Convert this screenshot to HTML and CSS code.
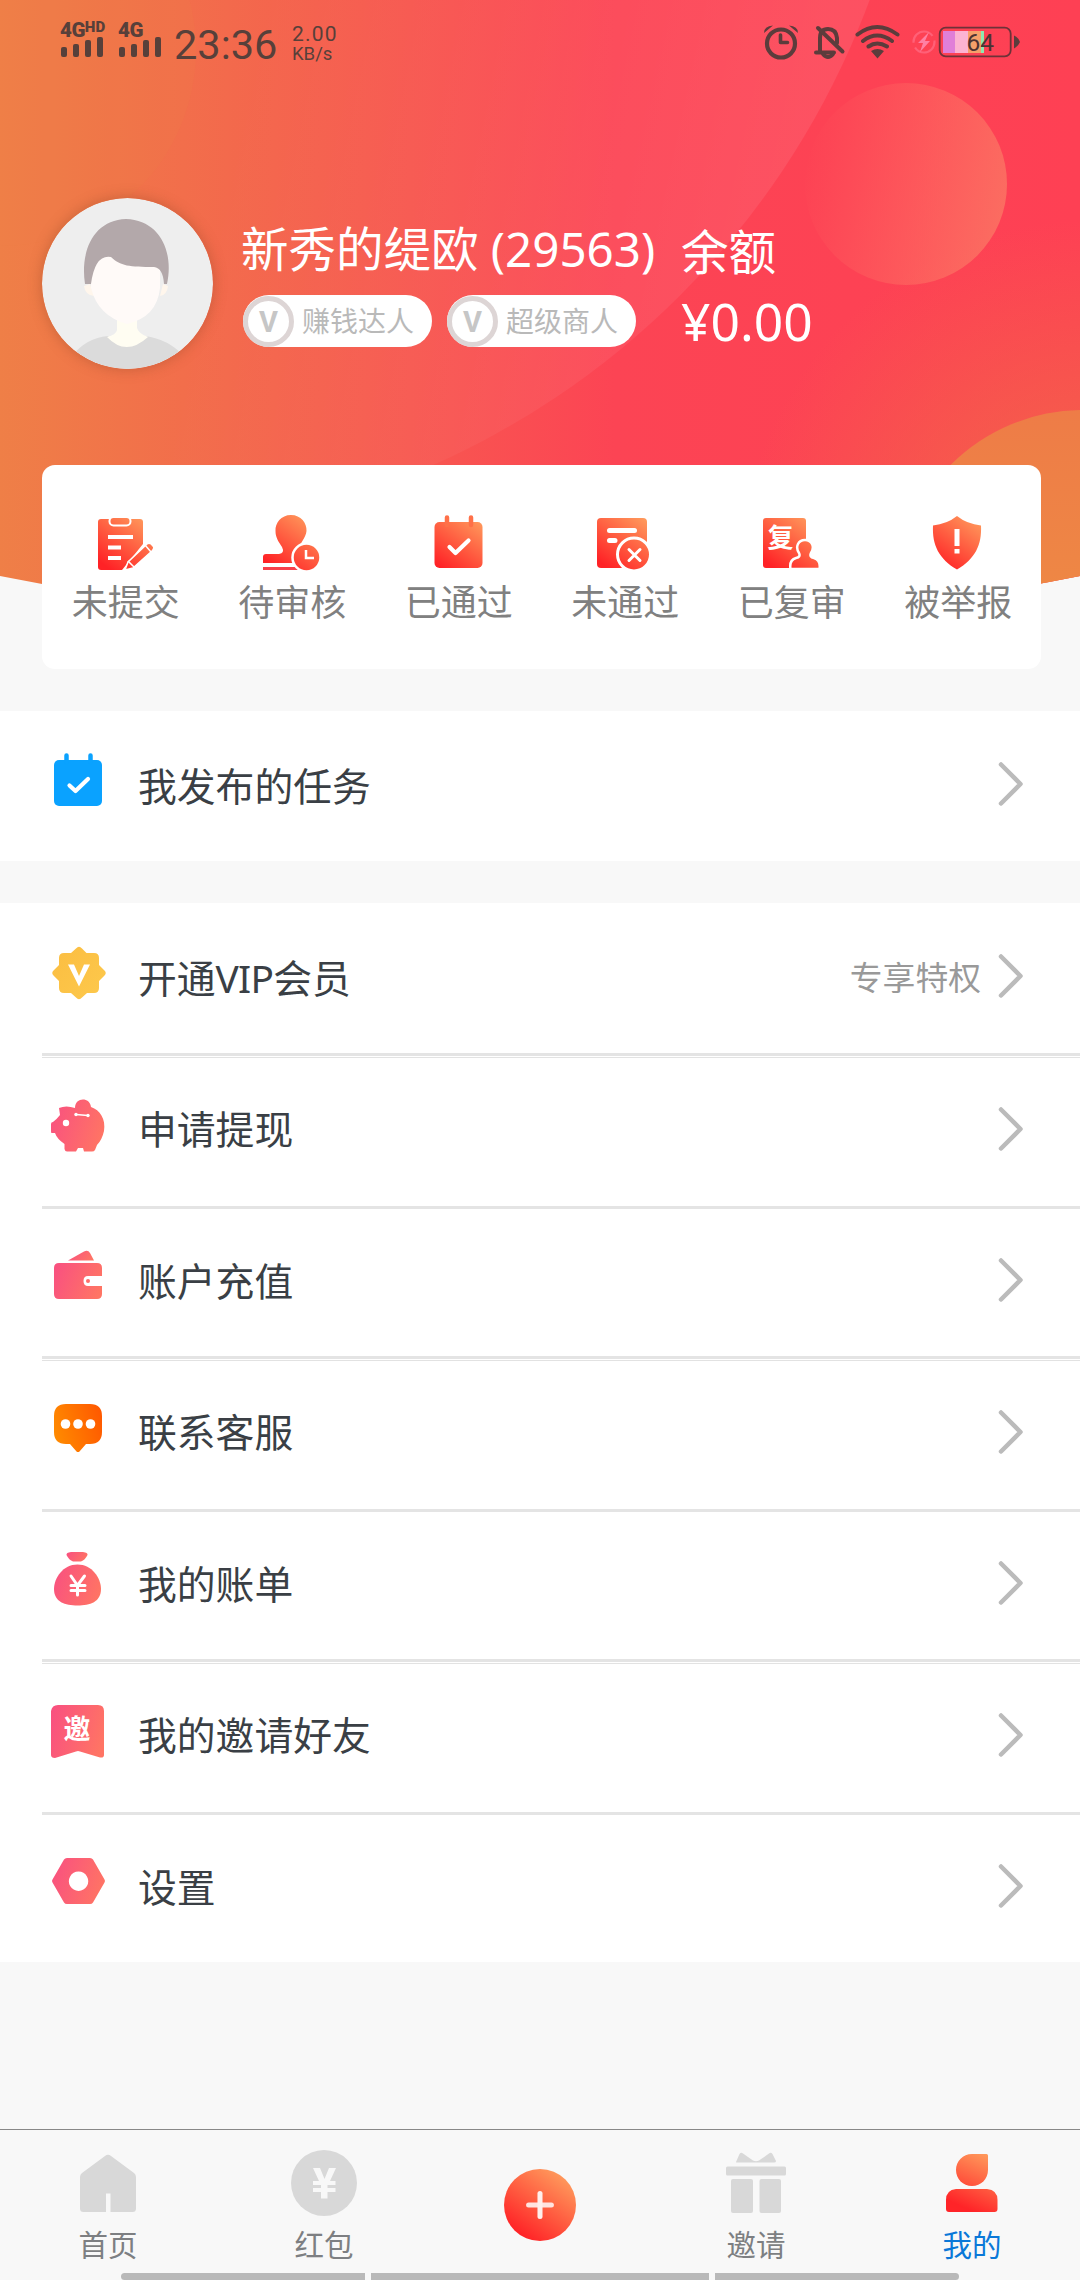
FILE: index.html
```html
<!DOCTYPE html>
<html lang="zh-CN">
<head>
<meta charset="utf-8">
<title>我的</title>
<link rel="stylesheet" href="styles.css">
</head>
<body>
<svg class="defs" width="0" height="0">
  <defs>
    <linearGradient id="hot" gradientUnits="userSpaceOnUse" x1="48" y1="4" x2="12" y2="54"><stop offset="0" stop-color="#ff9a5c"/><stop offset="1" stop-color="#ff2226"/></linearGradient>
    <linearGradient id="pink" x1="0" y1="0.3" x2="1" y2="0.6"><stop offset="0" stop-color="#f9527f"/><stop offset="1" stop-color="#ff7464"/></linearGradient>
    <linearGradient id="gold" x1="0" y1="0" x2="1" y2="1"><stop offset="0" stop-color="#fbbd41"/><stop offset="1" stop-color="#fdc94c"/></linearGradient>
    <linearGradient id="amber" x1="0" y1="0.6" x2="1" y2="0.3"><stop offset="0" stop-color="#ff8a00"/><stop offset="1" stop-color="#ff5a00"/></linearGradient>
    <symbol id="chevron" viewBox="0 0 28 48"><path d="M4 4.500L23.500 24L4 43.500" fill="none" stroke="#bbb" stroke-width="4.500" stroke-linecap="round" stroke-linejoin="round"/></symbol>
  </defs>
</svg>

<section class="top">
  <svg class="backdrop" viewBox="0 0 1080 610" width="1080" height="610">
    <defs>
      <linearGradient id="sky" x1="0" y1="0" x2="1" y2="0"><stop offset="0" stop-color="#ef7f47"/><stop offset=".17" stop-color="#f26e4b"/><stop offset=".38" stop-color="#f75850"/><stop offset=".57" stop-color="#fc4454"/><stop offset="1" stop-color="#fe4054"/></linearGradient>
      <radialGradient id="warm" gradientUnits="userSpaceOnUse" cx="1090" cy="570" r="350"><stop offset="0" stop-color="#ef7045"/><stop offset=".4" stop-color="#ef7045" stop-opacity=".55"/><stop offset="1" stop-color="#ef7045" stop-opacity="0"/></radialGradient>
      <linearGradient id="ball" x1="0" y1="0.4" x2="1" y2="0.6"><stop offset="0" stop-color="#ff7a66" stop-opacity="0"/><stop offset=".1" stop-color="#ff7064" stop-opacity=".08"/><stop offset="1" stop-color="#fb7463" stop-opacity=".85"/></linearGradient>
      <linearGradient id="corner" x1="0" y1="0" x2="0" y2="1"><stop offset="0" stop-color="#ee7c47"/><stop offset="1" stop-color="#ee9342"/></linearGradient>
      <clipPath id="arc"><path d="M0 0H1080V576Q540 684 0 576Z"/></clipPath>
      <linearGradient id="rim" gradientUnits="userSpaceOnUse" x1="250" y1="0" x2="800" y2="120"><stop offset="0" stop-color="#fff" stop-opacity="0"/><stop offset=".5" stop-color="#fff" stop-opacity=".035"/><stop offset="1" stop-color="#fff" stop-opacity=".08"/></linearGradient>
    </defs>
    <g clip-path="url(#arc)">
      <rect width="1080" height="610" fill="url(#sky)"/>
      <rect width="1080" height="610" fill="url(#warm)"/>
      <circle cx="99" cy="-286" r="822" fill="url(#rim)"/>
      <circle cx="0" cy="50" r="196" fill="#f08048" opacity=".18"/>
      <circle cx="906" cy="184" r="101" fill="url(#ball)"/>
      <circle cx="1083" cy="597" r="187" fill="url(#corner)"/>
    </g>
  </svg>

  <header class="status">
    <div class="signal">
      <div class="net">4G<sup>HD</sup></div>
      <div class="bars"><i class="b1"></i><i class="b2"></i><i class="b3"></i><i class="b4"></i></div>
    </div>
    <div class="signal second">
      <div class="net">4G</div>
      <div class="bars"><i class="b1"></i><i class="b2"></i><i class="b3"></i><i class="b4"></i></div>
    </div>
    <div class="clock">23:36</div>
    <div class="speed"><span>2.00</span><span class="unit">KB/s</span></div>
    <svg class="sysicons" width="266" height="40" viewBox="760 22 266 40">
      <g fill="none" stroke="#5c3c3c" stroke-linecap="round" stroke-linejoin="round">
        <circle cx="781" cy="43.500" r="14" stroke-width="4.200"/>
        <path d="M780.500 35V42.500H787.500" stroke-width="3.600"/>
        <path d="M820 52V38Q820 29 828 29Q836 29 837 38V43M816 52.500H834" stroke-width="4"/>
        <path d="M818 28L842.500 51.500" stroke-width="4"/>
        <path d="M823 54Q828 60 833 54" stroke-width="4"/>
        <path d="M857.500 34.500Q877 19.500 897.500 34.500M863 41Q877 30 892 41M868.500 46.500Q877 40.500 887 46.500" stroke-width="4"/>
      </g>
      <path d="M764 33Q764 26 773 25.500ZM798 33Q798 26 789 25.500ZM871 51Q877.500 47 884 51L877.500 58.500Z" fill="#5c3c3c"/>
      <circle cx="924" cy="42" r="10.500" fill="none" stroke="#ff6077" stroke-width="2.200" stroke-dasharray="27 5"/>
      <path d="M929 32L918 43H923L920 52L930 41H925Z" fill="#ff80a4"/>
      <rect x="943" y="31" width="12" height="22" fill="#e07fd8"/>
      <rect x="955" y="31" width="13" height="22" fill="#fcb3d2"/>
      <rect x="968" y="31" width="13" height="22" fill="#f6a06a"/>
      <rect x="981" y="31" width="3" height="22" fill="#8de8b0"/>
      <rect x="939.700" y="27.700" width="71" height="28.600" rx="6" fill="none" stroke="#6e3238" stroke-width="1.800"/>
      <path d="M1014 35.500Q1018 37 1020 42Q1018 46.500 1014 48.500Z" fill="#5c3c3c"/>
      <text x="966.500" y="51" font-size="24.500" fill="#4c3232" class="latin">64</text>
    </svg>
  </header>

  <div class="profile">
    <svg class="avatar" width="171" height="171" viewBox="0 0 171 171">
      <clipPath id="face"><circle cx="85.500" cy="85.500" r="85.500"/></clipPath>
      <g clip-path="url(#face)">
        <rect width="171" height="171" fill="#eee"/>
        <path d="M30 158Q44 140 66 138Q84 157 103 138Q126 141 142 158V171H30Z" fill="#dbdbdb"/>
        <path d="M75 118V132Q74 137 65 139Q84 159 106 139Q97 136 95 130V118Z" fill="#fffdf2"/>
        <path d="M42 88Q43 97 52 98L48 86ZM126 88Q125 97 118 98L121 86Z" fill="#fff6ec"/>
        <path d="M49 80Q50 52 65 56H118V90Q115 119 85 126Q56 118 49 90Z" fill="#fffaf8"/>
        <path d="M43 86C38 54 51 22 84 21C118 22 132 54 125 86H122Q121 70 112 69C88 69 78 68 69 59Q53 56 49 86Z" fill="#b3a8aa"/>
      </g>
    </svg>
    <div class="who">
      <div class="name">新秀的缇欧 (29563)</div>
      <div class="badges">
        <div class="badge"><b>V</b><span>赚钱达人</span></div>
        <div class="badge"><b>V</b><span>超级商人</span></div>
      </div>
    </div>
    <div class="balance">
      <div class="caption">余额</div>
      <div class="amount">¥0.00</div>
    </div>
  </div>

  <nav class="card">
    <div class="cell">
      <svg width="60" height="60" viewBox="0 0 60 60">
        <path d="M6 6H45Q48 6 48 9V31L27 57H6Q3 57 3 54V9Q3 6 6 6Z" fill="url(#hot)"/>
        <rect x="14.500" y="4" width="21" height="8.500" rx="4" fill="url(#hot)" stroke="#fff" stroke-width="2"/>
        <path d="M13 24H38M13 34.500H26M13 45H26" stroke="#fff" stroke-width="4"/>
        <path d="M30 57L33 49L52 31Q55 29 58 33Q60 35 57 38L38 55Z" fill="url(#hot)" stroke="#fff" stroke-width="1.500"/>
        <path d="M50 32L56 39M33 48L39 54" stroke="#fff" stroke-width="1.500"/>
      </svg>
      <span>未提交</span>
    </div>
    <div class="cell">
      <svg width="60" height="60" viewBox="0 0 60 60">
        <path d="M29 2C39 2 45 10 44.500 18C44 25 37 31 37 36L40 41V50H1V44Q1 41 4 41H17Q23 40 20 34C16 28 13.500 24 13.500 18C13 10 19 2 29 2Z" fill="url(#hot)"/>
        <path d="M1 55.500H40" stroke="#f7404a" stroke-width="3"/>
        <circle cx="44.500" cy="44.500" r="14" fill="url(#hot)" stroke="#fff" stroke-width="2.500"/>
        <path d="M44 37V45H52" fill="none" stroke="#fff" stroke-width="2.500"/>
      </svg>
      <span>待审核</span>
    </div>
    <div class="cell">
      <svg width="60" height="60" viewBox="0 0 60 60">
        <rect x="6.500" y="9" width="48" height="46" rx="5" fill="url(#hot)"/>
        <path d="M19 4.500V12M43 4.500V12" stroke="#ff7048" stroke-width="4.500" stroke-linecap="round"/>
        <path d="M21.500 34L27.500 40L40.500 27.500" fill="none" stroke="#fff" stroke-width="4.200" stroke-linecap="round" stroke-linejoin="round"/>
      </svg>
      <span>已通过</span>
    </div>
    <div class="cell">
      <svg width="60" height="60" viewBox="0 0 60 60">
        <rect x="2" y="5" width="50" height="50" rx="4" fill="url(#hot)"/>
        <path d="M14.500 17.500H39.500M14.500 27.500H20" stroke="#fff" stroke-width="5" stroke-linecap="round"/>
        <circle cx="39" cy="41.500" r="16.500" fill="url(#hot)" stroke="#fff" stroke-width="3"/>
        <path d="M34 36.500L45 47.500M45 36.500L34 47.500" stroke="#fff" stroke-width="3" stroke-linecap="round"/>
      </svg>
      <span>未通过</span>
    </div>
    <div class="cell">
      <svg width="60" height="60" viewBox="0 0 60 60">
        <rect x="2" y="5" width="43" height="50" rx="3" fill="url(#hot)"/>
        <text x="6.500" y="34" font-size="26" font-weight="700" fill="#fff" class="cjk">复</text>
        <path d="M44 27C51 27 54 34 50 40Q48 44 53 45Q60 47 58.500 56H29.500Q28 47 35 45Q40 44 38 40C34 34 37 27 44 27Z" fill="url(#hot)" stroke="#fff" stroke-width="2.500"/>
      </svg>
      <span>已复审</span>
    </div>
    <div class="cell">
      <svg width="60" height="60" viewBox="0 0 60 60">
        <path d="M29 3Q39 11 53 12.500C54 32 47 46 29 56.500C11 46 4 32 5 12.500Q19 11 29 3Z" fill="url(#hot)"/>
        <path d="M29 16V33M29 36V40.500" stroke="#fff" stroke-width="5"/>
      </svg>
      <span>被举报</span>
    </div>
  </nav>
</section>

<section class="group">
  <div class="row solo">
    <svg class="ico" width="60" height="60" viewBox="0 0 60 60">
      <rect x="6" y="10" width="48" height="46" rx="5" fill="#0aa2ff"/>
      <path d="M18.500 5.500V12M42.500 5.500V12" stroke="#0aa2ff" stroke-width="4.500" stroke-linecap="round"/>
      <path d="M21.500 35.500L27.500 41L40 29" fill="none" stroke="#fff" stroke-width="4.200" stroke-linecap="round" stroke-linejoin="round"/>
    </svg>
    <span class="label">我发布的任务</span>
    <svg class="arrow"><use href="#chevron"/></svg>
  </div>
</section>

<section class="group list">
  <div class="row">
    <svg class="ico" width="60" height="60" viewBox="0 0 60 60">
      <path transform="translate(0 1)" d="M28 5.500Q31 2 34 5.500L38.500 10H46Q51 10 51 15V22L56.500 27.500Q59 30 56.500 32.500L51 38V45Q51 50 46 50H39L34 54.500Q31 58 28 54.500L23 50H16Q11 50 11 45V38L5.500 32.500Q3 30 5.500 27.500L11 22V15Q11 10 16 10H23Z" fill="url(#gold)"/>
      <path d="M20 22.500H26L31 34L36 22.500H42L31 44.500Z" fill="#fff"/>
    </svg>
    <span class="label">开通<span class="vip">VIP</span>会员</span>
    <span class="hint">专享特权</span>
    <svg class="arrow"><use href="#chevron"/></svg>
  </div>
  <hr class="double">
  <div class="row r2">
    <svg class="ico" width="60" height="60" viewBox="0 0 60 60">
      <path transform="translate(0 1)" d="M11 12Q18 9 27 12C27 1 42 1 43 11C52 14 58 23 56 35Q54 44 49 49L47 54Q46 55.500 44 55.500H36L35 52H30L28 55.500H19Q17 55.500 16.500 53V48Q9 43 7 37H3.500Q3 37 3 35V28Q3 26 5 26Q8 24 12 19Z" fill="url(#pink)"/>
      <circle cx="18" cy="28" r="3.200" fill="#fff"/>
      <path d="M28 19.500L40 20.500" fill="none" stroke="#fff" stroke-width="1.500" stroke-linecap="round"/>
      <circle cx="28" cy="19.500" r="1.700" fill="#fff"/><circle cx="40" cy="20.500" r="1.700" fill="#fff"/>
    </svg>
    <span class="label">申请提现</span>
    <svg class="arrow"><use href="#chevron"/></svg>
  </div>
  <hr>
  <div class="row r3">
    <svg class="ico" width="60" height="60" viewBox="0 0 60 60">
      <path d="M20 14.500L36 5.500Q40 3.500 42 7L46 14.500Z" fill="url(#pink)"/>
      <path d="M11 17H49Q54 17 54 22V30H40Q35.500 30 35.500 35Q35.500 40 40 40H54V48Q54 53 49 53H11Q6 53 6 48V22Q6 17 11 17Z" fill="url(#pink)"/>
      <circle cx="40" cy="35" r="2" fill="#ff6c6a"/>
    </svg>
    <span class="label">账户充值</span>
    <svg class="arrow"><use href="#chevron"/></svg>
  </div>
  <hr class="double">
  <div class="row r2">
    <svg class="ico" width="60" height="60" viewBox="0 0 60 60">
      <g transform="translate(0 1)">
        <path d="M18 5H42Q54 5 54 17V33Q54 45 42 45H38L31.500 52.500Q30 53.500 28.500 52.500L22 45H18Q6 45 6 33V17Q6 5 18 5Z" fill="url(#amber)"/>
        <circle cx="17.500" cy="25" r="4.800" fill="#fff"/><circle cx="30" cy="25" r="4.800" fill="#fff"/><circle cx="42.500" cy="25" r="4.800" fill="#fff"/>
      </g>
    </svg>
    <span class="label">联系客服</span>
    <svg class="arrow"><use href="#chevron"/></svg>
  </div>
  <hr>
  <div class="row r3">
    <svg class="ico" width="60" height="60" viewBox="0 0 60 60">
      <path d="M18.500 6Q18 3.500 23 3H35Q40 3.500 39.500 6Q37 11 33 12.500H25Q21 11 18.500 6Z" fill="url(#pink)"/>
      <path d="M29.500 15.500C44 15.500 53 29 53 40C53 53 42 56.500 29.500 56.500S6 53 6 40C6 29 15 15.500 29.500 15.500Z" fill="url(#pink)"/>
      <path d="M23 27L29.500 36.500L36.500 27M29.500 36V46M23 36.500H37M23 41.500H37" fill="none" stroke="#fff" stroke-width="3" stroke-linecap="round"/>
    </svg>
    <span class="label">我的账单</span>
    <svg class="arrow"><use href="#chevron"/></svg>
  </div>
  <hr class="double">
  <div class="row r2">
    <svg class="ico" width="60" height="60" viewBox="0 0 60 60">
      <path d="M10 4H50Q56 4 56 10V54Q56 57 52 56.500L32 50.500Q30 49.500 28 50.500L7 57Q3 57 3 54V10Q4 4 10 4Z" fill="url(#pink)"/>
      <text x="15.500" y="38" font-size="27" font-weight="700" fill="#fff" class="cjk">邀</text>
    </svg>
    <span class="label">我的邀请好友</span>
    <svg class="arrow"><use href="#chevron"/></svg>
  </div>
  <hr>
  <div class="row r3">
    <svg class="ico" width="60" height="60" viewBox="0 0 60 60">
      <path fill-rule="evenodd" d="M19 6H42Q44 6 45 7.500L56.500 27.500Q57.500 29 56.500 30.500L45 50.500Q44 52 42 52H19Q17 52 16 50.500L4.500 30.500Q3.500 29 4.500 27.500L16 7.500Q17 6 19 6ZM30.500 19.500A9.700 9.700 0 1 0 30.600 19.500Z" fill="url(#pink)"/>
    </svg>
    <span class="label">设置</span>
    <svg class="arrow"><use href="#chevron"/></svg>
  </div>
</section>

<footer class="tabs">
  <div class="tab">
    <svg width="66" height="66" viewBox="0 0 66 66"><path d="M30 6Q33 3.500 36 6L59 23Q61 24.500 61 27V58.500Q61 62 57.500 62H35.500V43.500H31V62H8.500Q5 62 5 58.500V27Q5 24.500 7 23Z" fill="#d8d8d8"/></svg>
    <span>首页</span>
  </div>
  <div class="tab">
    <svg width="66" height="66" viewBox="0 0 66 66"><circle cx="33" cy="33" r="33" fill="#d8d8d8"/><path d="M22 18H29L33.500 29L38 18H45L39 31H44.500V35H36.500V38H44.500V42H36.500V48.500H30V42H22V38H30V35H22V31H28Z" fill="#f8f8f8"/></svg>
    <span>红包</span>
  </div>
  <div class="tab plus">
    <svg width="72" height="72" viewBox="0 0 60 60"><circle cx="30" cy="30" r="30" fill="url(#hot)"/><path d="M20.500 30H39.500" stroke="#ffe3df" stroke-width="4.200" stroke-linecap="round"/><path d="M30 20.500V39.500" stroke="#ffefec" stroke-width="4.200" stroke-linecap="round"/></svg>
  </div>
  <div class="tab">
    <svg width="66" height="66" viewBox="0 0 66 66" fill="#d8d8d8"><path d="M13 12L16.500 4Q18 2 20 3.500L30 10.500Q33 12 36 10.500L46 3.500Q48 2 49.500 4L53 11Q53 12.500 51 12.500H14Q13 12.500 13 12Z"/><rect x="3" y="16.500" width="60" height="9" rx="1.500"/><rect x="8" y="29" width="22" height="34" rx="2"/><rect x="36.500" y="29" width="21.500" height="34" rx="2"/></svg>
    <span>邀请</span>
  </div>
  <div class="tab on">
    <svg width="66" height="66" viewBox="0 0 66 66">
      <defs><linearGradient id="me" gradientUnits="userSpaceOnUse" x1="46" y1="2" x2="22" y2="56"><stop offset="0" stop-color="#ff9c5c"/><stop offset="1" stop-color="#ff2428"/></linearGradient></defs>
      <path d="M33 4H47.500Q49 4 49 5.500V20C49 29 42 36 33 36S17 29 17 20S24 4 33 4ZM17 39H48Q58.500 40 58.500 50V59Q58.500 62 55.500 62H10Q7 62 7 59V50Q7 40 17 39Z" fill="url(#me)"/>
    </svg>
    <span>我的</span>
  </div>
  <div class="gesture"><i></i><i></i><i></i></div>
</footer>
</body>
</html>
```
FILE: styles.css
```css
* { box-sizing: border-box; }
html, body { margin: 0; padding: 0; }
body {
  width: 1080px;
  height: 2280px;
  display: flex;
  flex-direction: column;
  overflow: hidden;
  background: #f8f8f8;
  font-family: "Noto Sans", "Noto Sans CJK SC", sans-serif;
  color: #3a3f45;
}
svg { display: block; flex: none; }
.defs { position: absolute; }
.latin { font-family: Roboto, sans-serif; }
.cjk { font-family: "Noto Sans CJK SC", sans-serif; }

/* hero */
.top { position: relative; height: 711px; flex: none; }
.backdrop { position: absolute; left: 0; top: 0; }
.status, .profile, .card { position: relative; }
.status {
  display: flex;
  height: 198px;
  padding: 20px 54px 0 60px;
  font-family: Roboto, sans-serif;
  color: #57403a;
}
.signal { width: 58px; }
.second { width: 56px; }
.net { height: 17px; line-height: 20px; font-size: 20.500px; font-weight: 900; letter-spacing: -0.5px; display: flex; }
.net sup { font-size: 15px; line-height: 15px; letter-spacing: 0; }
.bars { display: flex; align-items: flex-end; gap: 6px; height: 20px; padding-left: 1px; }
.bars i { width: 6px; border-radius: 2px; background: #57403a; }
.b1 { height: 10px; }
.b2 { height: 13px; }
.b3 { height: 17px; }
.b4 { height: 20px; }
.clock { font-size: 41.500px; line-height: 50px; width: 118px; }
.speed { display: flex; flex-direction: column; padding-top: 4px; font-size: 21px; line-height: 20px; letter-spacing: 1.2px; }
.unit { font-size: 18.500px; line-height: 20px; letter-spacing: 0; }
.sysicons { margin: 2px 0 0 auto; }

.profile { display: flex; height: 267px; padding-left: 42px; color: #fff; }
.avatar { border-radius: 50%; box-shadow: 0 0 14px rgba(120, 60, 30, .35); }
.who { flex: none; width: 468px; padding: 21px 0 0 28px; }
.name { height: 76px; font-size: 47.500px; line-height: 60px; white-space: nowrap; }
.badges { display: flex; gap: 15px; padding-left: 2px; }
.badge { display: flex; align-items: center; width: 189px; height: 52px; border-radius: 26px; background: #fff; color: #b9b9b9; font-size: 28px; line-height: 52px; }
.badge b { width: 51px; height: 51px; border: 5px solid #ddd5d5; border-radius: 50%; font: 700 29px/42px Roboto, sans-serif; color: #c6c6c6; text-align: center; margin-right: 8px; }
.balance { padding-top: 24px; }
.caption { height: 63px; font-size: 47.500px; line-height: 60px; }
.amount { font-size: 51.500px; line-height: 72px; }

.card { display: flex; width: 999px; height: 204px; margin-left: 42px; padding-top: 48px; border-radius: 13px; background: #fff; }
.cell { flex: 1; display: flex; flex-direction: column; align-items: center; color: #808080; font-size: 36px; line-height: 54px; }
.cell span { margin: 3px 0 0 1px; }

/* lists */
.group { flex: none; background: #fff; }
.list { margin-top: 42px; }
.row { display: flex; align-items: center; height: 150px; padding: 0 55px 0 48px; }
.r2 { height: 148px; padding-bottom: 2px; }
.r3 { height: 147px; }
.r2 .label { margin-top: -4px; }
.r3 .label { margin-top: -4px; }
.r3 .arrow { margin-top: -6px; }
.ico { margin: -12px 30px 0 0; }
.r3 .ico { margin-top: -14px; }
.label { flex: 1; font-size: 38.800px; line-height: 60px; }
.vip { letter-spacing: -0.8px; }
.hint { margin-right: 16px; font-size: 32.800px; line-height: 50px; color: #999; }
.arrow { width: 28px; height: 48px; margin-top: -4px; }
hr { height: 3px; margin: 0 0 0 42px; border: 0; background: #e4e4e4; }
.double { height: 5px; background: linear-gradient(#e4e4e4 3px, #fff 3px, #fff 4px, #e2e2e2 4px); }

/* tab bar */
.tabs { position: relative; display: flex; height: 151px; margin-top: auto; border-top: 1px solid #888; }
.tab { flex: 1; display: flex; flex-direction: column; align-items: center; padding-top: 20px; font-size: 29.500px; line-height: 44px; color: #7d7f82; }
.tab span { margin-top: 7px; }
.plus { padding-top: 39px; }
.on { color: #0a78d8; }
.gesture { position: absolute; left: 121px; right: 121px; bottom: 0; height: 7px; display: flex; gap: 6px; border-radius: 4px 4px 4px 4px; overflow: hidden; }
.gesture i { flex: 244; background: #b9b9b9; }
.gesture i:nth-child(2) { flex: 338; }
```
